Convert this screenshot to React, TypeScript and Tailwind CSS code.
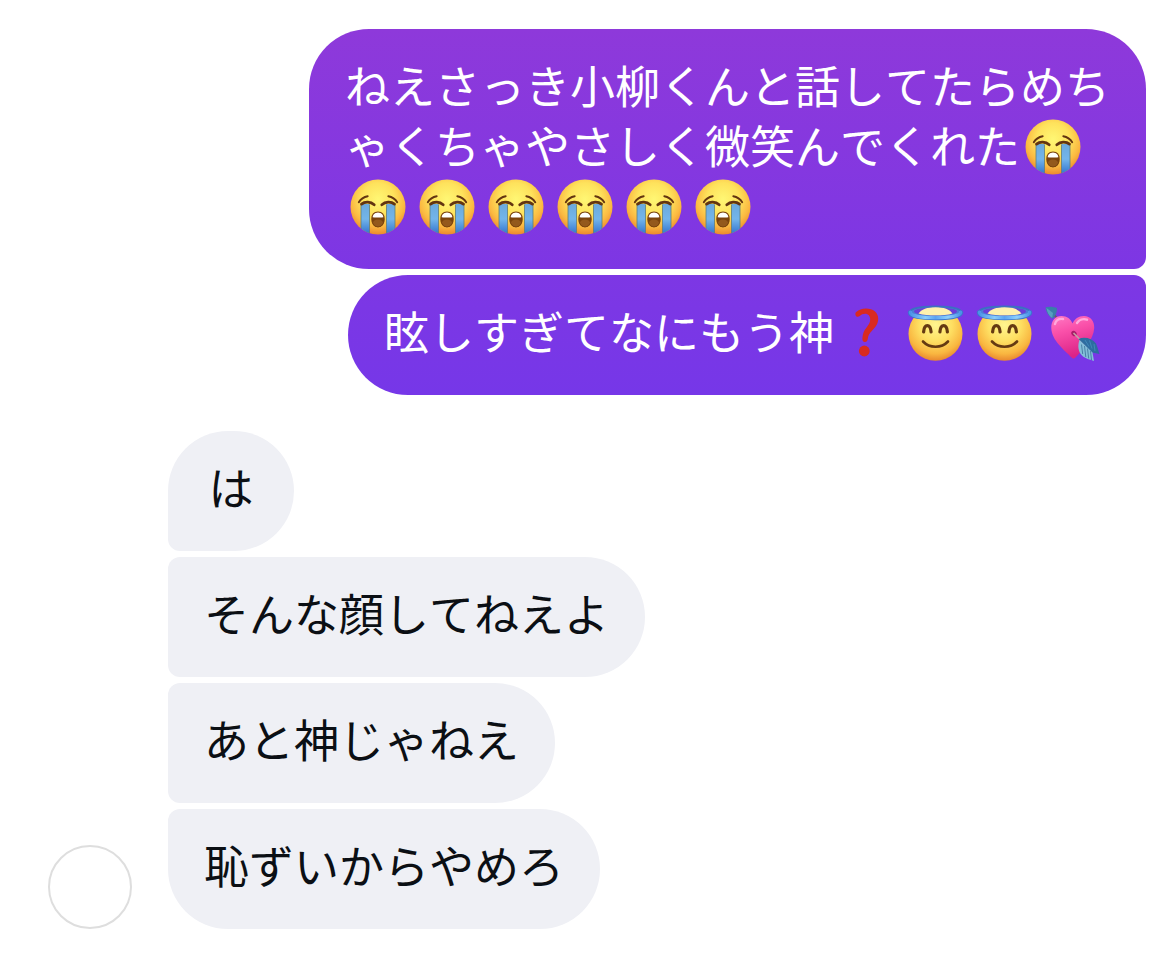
import { useId, type ReactNode } from "react";
import clsx from "clsx";

const emojiClass = "-mt-3.5 -mb-1 inline-block h-14 w-[69px] align-middle";

function SobEmoji() {
  const id = useId();
  return (
    <svg className={emojiClass} viewBox="0 0 69 56" role="img" aria-label="😭">
      <defs>
        <radialGradient id={`${id}f`} cx="0.5" cy="0.36" r="0.66">
          <stop offset="0" stopColor="#fff774" />
          <stop offset="0.45" stopColor="#fee25c" />
          <stop offset="0.75" stopColor="#fbb941" />
          <stop offset="1" stopColor="#e9822c" />
        </radialGradient>
        <linearGradient id={`${id}t`} x1="0" y1="0" x2="0" y2="1">
          <stop offset="0" stopColor="#6ba9dc" />
          <stop offset="0.5" stopColor="#73b5ea" />
          <stop offset="1" stopColor="#3173cf" />
        </linearGradient>
        <clipPath id={`${id}c`}>
          <circle cx="27.5" cy="27.5" r="27.5" />
        </clipPath>
        <clipPath id={`${id}m`}>
          <path d="M27.500 32.500c3.800 0 6.200 2.800 6.200 7.200s-2.400 7.800-6.200 7.800-6.200-3.400-6.200-7.800 2.400-7.200 6.200-7.200z" />
        </clipPath>
      </defs>
      <g transform="translate(5.500 .5)">
        <circle cx="27.500" cy="27.500" r="27.500" fill={`url(#${id}f)`} />
        <g clipPath={`url(#${id}c)`}>
          <path d="M10.500 24.500h8.500v30h-8.500zM36 24.500h8.500v30H36z" fill={`url(#${id}t)`} />
          <path d="M10.500 25v30M19 25v30M36 25v30M44.500 25v30" stroke="#607d7a" strokeWidth="0.8" />
        </g>
        <g fill="none" stroke="#633510" strokeLinecap="round">
          <path d="M8.300 22.800c2-3.400 5-5.400 8.900-6.100M46.700 22.800c-2-3.400-5-5.400-8.900-6.100" strokeWidth="1.900" />
          <path d="M11 24.600c3.500-3 9.200-2.600 12.700.6M44 24.600c-3.500-3-9.200-2.600-12.700.6" strokeWidth="2.800" />
        </g>
        <g clipPath={`url(#${id}m)`}>
          <path d="M21 32h13v16H21z" fill="#7a430d" />
          <ellipse cx="27.500" cy="44.500" rx="5.500" ry="4.500" fill="#94591c" />
          <path d="M21 32h13v5.500c-2.500.8-10.500.8-13 0z" fill="#fff" />
        </g>
        <path
          d="M27.500 32.500c3.800 0 6.200 2.800 6.200 7.200s-2.400 7.800-6.200 7.800-6.200-3.400-6.200-7.800 2.400-7.200 6.200-7.200z"
          fill="none"
          stroke="#7a430d"
          strokeWidth="1.100"
        />
      </g>
    </svg>
  );
}

function HaloEmoji() {
  const id = useId();
  return (
    <svg className={emojiClass} viewBox="0 0 69 56" role="img" aria-label="😇">
      <defs>
        <radialGradient id={`${id}f`} cx="0.5" cy="0.34" r="0.68">
          <stop offset="0" stopColor="#fff590" />
          <stop offset="0.45" stopColor="#fedf62" />
          <stop offset="0.78" stopColor="#f9b640" />
          <stop offset="1" stopColor="#e6802c" />
        </radialGradient>
        <linearGradient id={`${id}h`} x1="0" y1="0" x2="1" y2="0">
          <stop offset="0" stopColor="#4c93e8" />
          <stop offset="0.3" stopColor="#8accfb" />
          <stop offset="0.5" stopColor="#5ba3f2" />
          <stop offset="0.75" stopColor="#8ed1fd" />
          <stop offset="1" stopColor="#4c93e8" />
        </linearGradient>
      </defs>
      <g transform="translate(5 0)">
        <circle cx="27.500" cy="28.800" r="27" fill={`url(#${id}f)`} />
        <ellipse cx="27.500" cy="7" rx="26" ry="6" fill="#4a7fd6" />
        <ellipse cx="27.500" cy="6.400" rx="21.500" ry="4" fill="#6a3fd8" />
        <path d="M10.500 8.600C13 4.500 19.500 2 27.500 2s14.500 2.500 17 6.600C40 10.200 34 10.600 27.500 10.600S15 10.200 10.500 8.600z" fill="#fff1ad" />
        <path
          d="M1.800 7.200C2 3.600 13 1.400 27.500 1.400S53 3.600 53.200 7.200"
          fill="none"
          stroke="#3c70c0"
          strokeWidth="1.800"
        />
        <path
          d="M2 7.400c0 3.900 11 5.600 25.500 5.600S53 11.300 53 7.400"
          fill="none"
          stroke="#3c74cc"
          strokeWidth="4.400"
          strokeLinecap="round"
        />
        <path
          d="M2.500 7.200c0 3.700 11 5.500 25 5.500s25-1.800 25-5.500"
          fill="none"
          stroke={`url(#${id}h)`}
          strokeWidth="3.400"
          strokeLinecap="round"
        />
        <g fill="none" stroke="#653a12" strokeLinecap="round">
          <path d="M15.600 27c.7-8.400 6.800-8.400 7.500 0M31.900 27c.7-8.400 6.800-8.400 7.500 0" strokeWidth="3.200" />
          <path d="M15 36.500c6.500 7 18.500 7 25 0" strokeWidth="2.600" />
        </g>
      </g>
    </svg>
  );
}

function QuestionEmoji() {
  return (
    <svg className={emojiClass} viewBox="0 0 69 56" role="img" aria-label="❓">
      <path
        d="M22.300 7c2.300-2.200 5.700-3.400 9.600-3.400 7.200 0 12.300 3.900 12.300 10.100 0 4.900-2.400 8-6 11.700-2.800 2.800-3.800 4.400-4.300 7.900-.3 2.400-1.100 3.800-2.900 3.800-2 0-2.800-1.600-2.600-4 .4-4.600 1.500-7.600 4.200-10.700 2.300-2.700 3.600-4.800 3.600-7.800 0-3.500-1.900-5.800-5.100-5.800-2.200 0-3.700.8-5.300 2.200-1.200 1-2.700 1.100-3.600.2-1.100-1.100-1.200-3.200.1-4.500z"
        fill="#d92a20"
      />
      <circle cx="30.300" cy="46" r="5.400" fill="#d92a20" />
    </svg>
  );
}

function HeartArrowEmoji() {
  const id = useId();
  return (
    <svg className={emojiClass} viewBox="0 0 69 56" role="img" aria-label="💘">
      <defs>
        <linearGradient id={`${id}p`} x1="0" y1="0" x2="0.3" y2="1">
          <stop offset="0" stopColor="#ff7bc4" />
          <stop offset="0.4" stopColor="#fa51aa" />
          <stop offset="1" stopColor="#dc2387" />
        </linearGradient>
      </defs>
      <path d="M11 8l9 9" stroke="#6b5965" strokeWidth="1.800" />
      <path d="M4.500 2.300c3.600-1.200 8.400-.7 11.500.8.300 3.800-1.500 8-4.500 10.600C7.500 11.500 5 7 4.500 2.300z" fill="#397fa9" />
      <path d="M5.500 3l6.500 5-.8 5C8 11 6 7 5.500 3z" fill="#579fc0" />
      <path
        d="M32.500 53.500c-1 0-1.700-.6-2.500-1.500C24 45.500 10.700 35.800 10.300 23.300 10 15.600 14.500 11 20.500 11c5.500 0 9.500 3 11 7.500C33.500 14 37.500 11 43 11c6.500 0 10.500 5 10.200 12C52.700 35.600 40.500 45.500 35 52c-.8.900-1.500 1.500-2.500 1.500z"
        fill={`url(#${id}p)`}
      />
      <path d="M14 19c1-3.500 4-5.500 8-5M36 18c2-3 6-4.700 10-3.300" fill="none" stroke="#ffa9dd" strokeWidth="2.400" strokeLinecap="round" />
      <ellipse cx="33" cy="28.500" rx="3" ry="2.300" transform="rotate(45 33 28.500)" fill="#a91c68" />
      <path d="M32.500 28l17 17" stroke="#c2a3a5" strokeWidth="1.600" />
      <path d="M37.500 34c5.500-2.500 13.500-1 17.500 4.500 1.500 3 2.200 7 3.500 10.500L51 47.500z" fill="#2d6da0" />
      <path d="M38.500 35l13 12.500L53 56c-4-1.800-8.500-2-12-5.500-4-4-4.500-10-2.500-15.500z" fill="#83bfd9" />
      <path d="M40.500 39.500l1.200 9.500M43.500 41l1.300 11M46.500 43.500l1.200 10M49.500 46l1 9" stroke="#3a7198" strokeWidth="0.8" />
      <path d="M44 35l4 6.500M48.500 35.500l2.500 8M53 39l1 7" stroke="#418bba" strokeWidth="0.9" />
    </svg>
  );
}

type BubbleProps = { className: string; children: ReactNode };

function Bubble({ className, children }: BubbleProps) {
  return (
    <p
      className={clsx(
        "min-w-[126px] max-w-[837px] break-all px-9 pt-[26px] pb-[34px] text-[45px] leading-[60px]",
        className,
      )}
    >
      {children}
    </p>
  );
}

const received = [
  { text: "は", shape: "rounded-t-[60px] rounded-br-[60px] rounded-bl-xl text-center" },
  { text: "そんな顔してねえよ", shape: "rounded-l-xl rounded-r-[60px]" },
  { text: "あと神じゃねえ", shape: "rounded-l-xl rounded-r-[60px]" },
  { text: "恥ずいからやめろ", shape: "rounded-tl-xl rounded-r-[60px] rounded-bl-[60px]" },
];

export default function App() {
  return (
    <main
      lang="ja"
      className="flex min-h-screen flex-col gap-9 bg-white pt-[29px] pr-6 pb-6 pl-12 font-['Noto_Sans_CJK_JP',sans-serif] [font-kerning:none]"
    >
      <section className="flex flex-col items-end gap-1.5 text-white">
        <Bubble className="rounded-t-[60px] rounded-bl-[60px] rounded-br-xl bg-linear-to-b from-[#8e39da] to-[#7d36e4]">
          ねえさっき小柳くんと話してたらめちゃくちゃやさしく微笑んでくれた
          <SobEmoji />
          <SobEmoji />
          <SobEmoji />
          <SobEmoji />
          <SobEmoji />
          <SobEmoji />
          <SobEmoji />
        </Bubble>
        <Bubble className="rounded-l-[60px] rounded-tr-xl rounded-br-[60px] bg-linear-to-b from-[#7d37e4] to-[#7637e8]">
          眩しすぎてなにもう神
          <QuestionEmoji />
          <HaloEmoji />
          <HaloEmoji />
          <HeartArrowEmoji />
        </Bubble>
      </section>
      <section className="flex items-end gap-9">
        <div className="size-[84px] shrink-0 rounded-full border-2 border-[#dedede] bg-white" />
        <div className="flex flex-col items-start gap-1.5 text-[#0b0f14]">
          {received.map(({ text, shape }) => (
            <Bubble key={text} className={clsx("bg-[#eff0f5]", shape)}>
              {text}
            </Bubble>
          ))}
        </div>
      </section>
    </main>
  );
}
